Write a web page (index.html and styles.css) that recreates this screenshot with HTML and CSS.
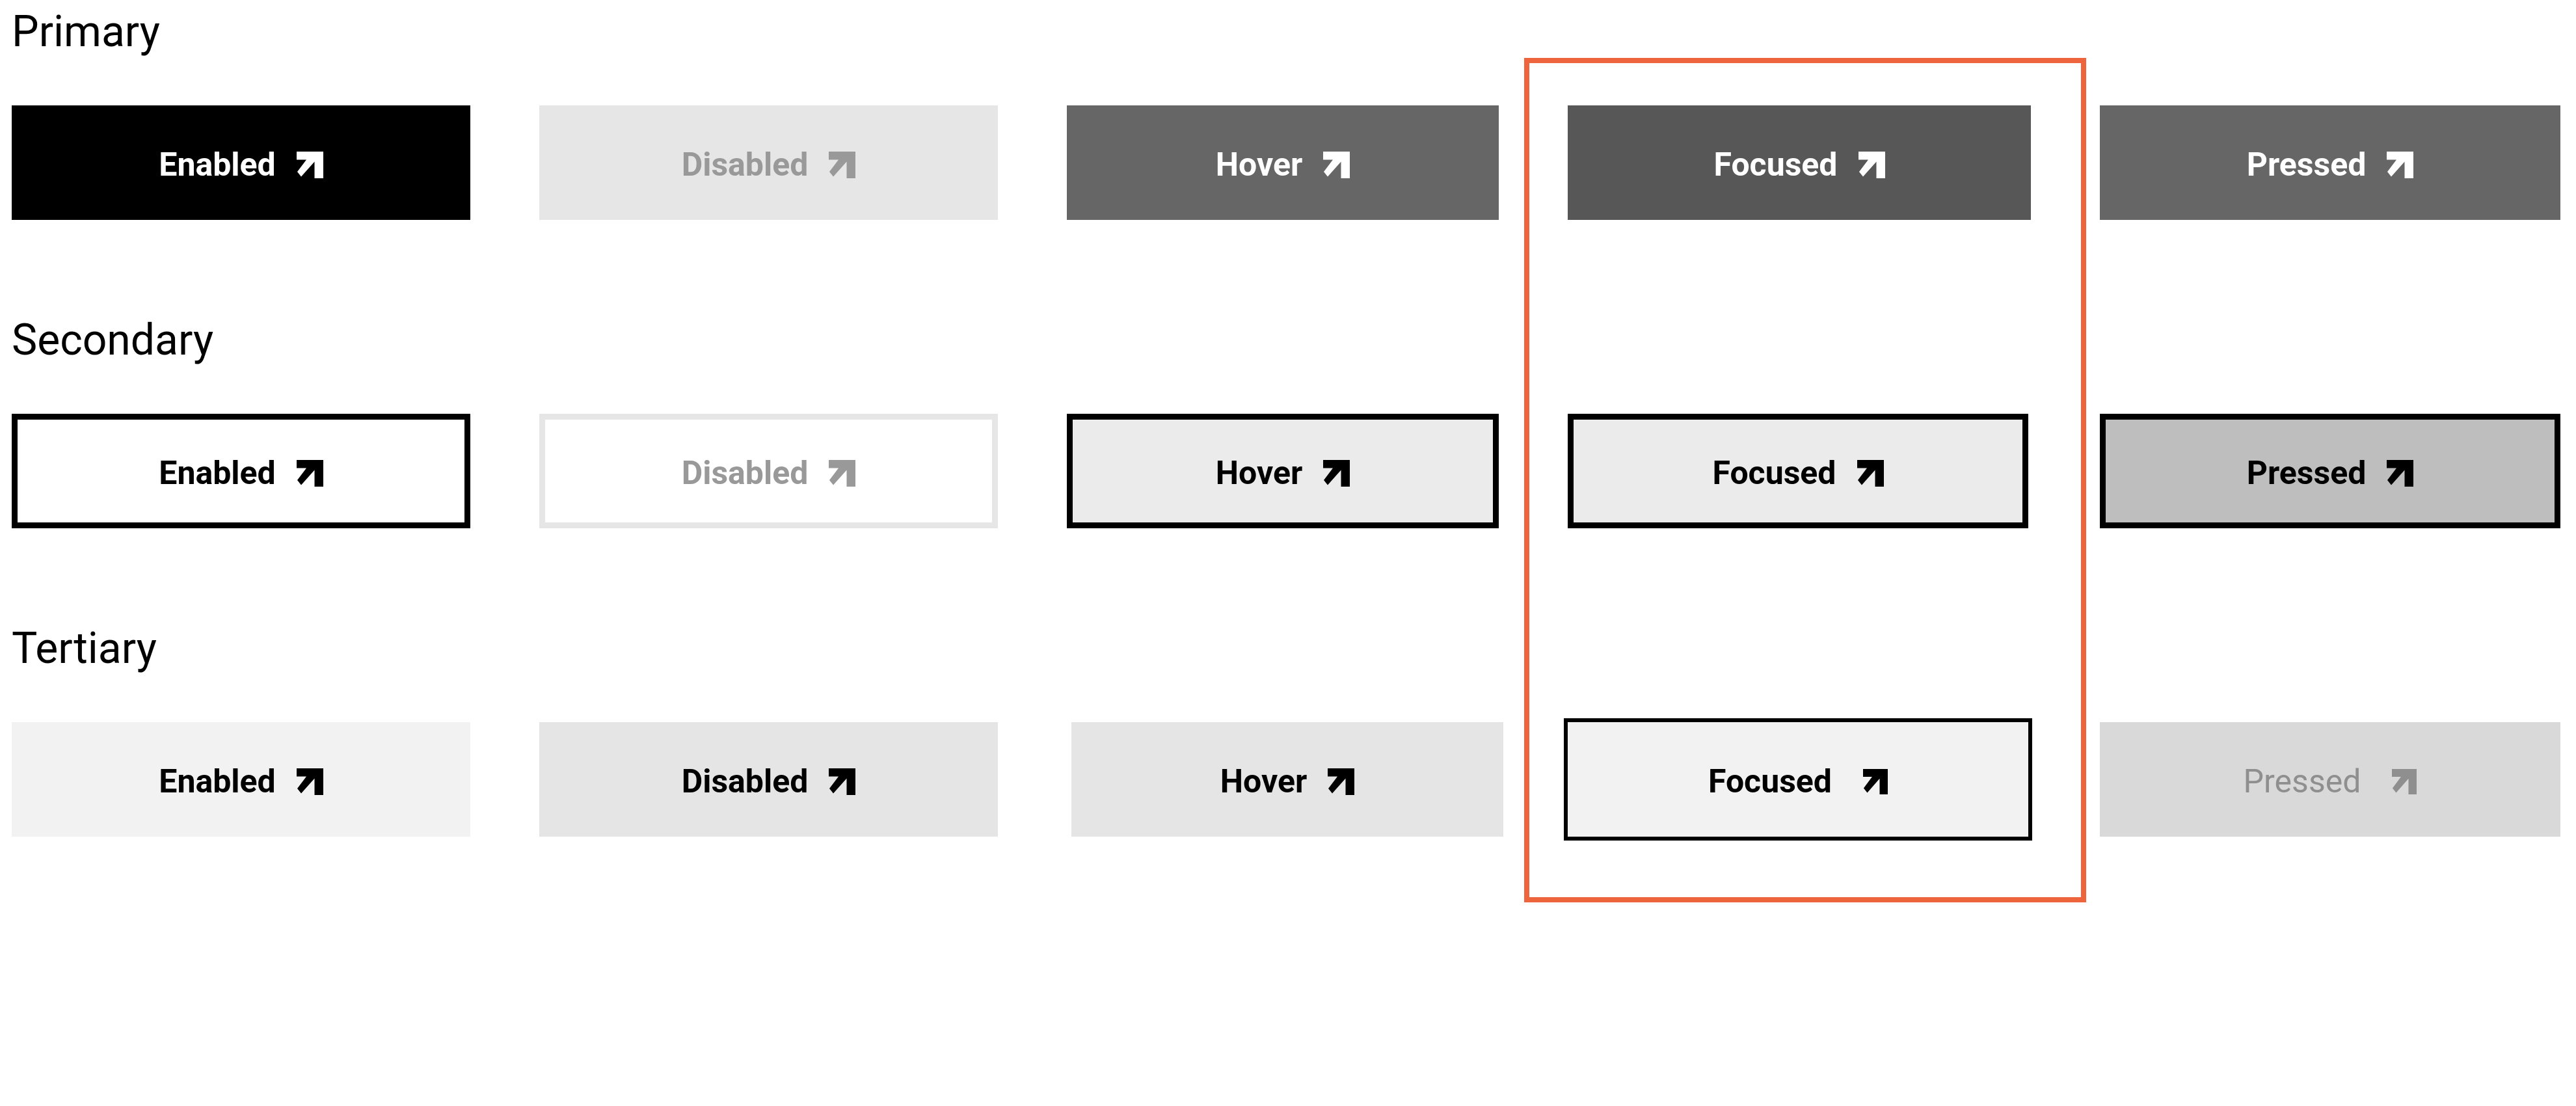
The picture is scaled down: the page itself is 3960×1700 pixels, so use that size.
FILE: index.html
```html
<!DOCTYPE html>
<html lang="en">
<head>
<meta charset="utf-8">
<title>Buttons</title>
<link rel="stylesheet" href="styles.css">
</head>
<body>
<main class="board">
  <div class="focus-frame"></div>

  <h2 class="label row-primary-label">Primary</h2>
  <button class="btn primary enabled"><span>Enabled</span><svg class="arrow" viewBox="0 0 41 41"><polygon points="0,0 41,0 41,41 27.5,41 27.5,15.5 7,38.5 1,31 15,12.5 0,12.5"/></svg></button>
  <button class="btn primary disabled"><span>Disabled</span><svg class="arrow" viewBox="0 0 41 41"><polygon points="0,0 41,0 41,41 27.5,41 27.5,15.5 7,38.5 1,31 15,12.5 0,12.5"/></svg></button>
  <button class="btn primary hover"><span>Hover</span><svg class="arrow" viewBox="0 0 41 41"><polygon points="0,0 41,0 41,41 27.5,41 27.5,15.5 7,38.5 1,31 15,12.5 0,12.5"/></svg></button>
  <button class="btn primary focused"><span>Focused</span><svg class="arrow" viewBox="0 0 41 41"><polygon points="0,0 41,0 41,41 27.5,41 27.5,15.5 7,38.5 1,31 15,12.5 0,12.5"/></svg></button>
  <button class="btn primary pressed"><span>Pressed</span><svg class="arrow" viewBox="0 0 41 41"><polygon points="0,0 41,0 41,41 27.5,41 27.5,15.5 7,38.5 1,31 15,12.5 0,12.5"/></svg></button>

  <h2 class="label row-secondary-label">Secondary</h2>
  <button class="btn secondary enabled"><span>Enabled</span><svg class="arrow" viewBox="0 0 41 41"><polygon points="0,0 41,0 41,41 27.5,41 27.5,15.5 7,38.5 1,31 15,12.5 0,12.5"/></svg></button>
  <button class="btn secondary disabled"><span>Disabled</span><svg class="arrow" viewBox="0 0 41 41"><polygon points="0,0 41,0 41,41 27.5,41 27.5,15.5 7,38.5 1,31 15,12.5 0,12.5"/></svg></button>
  <button class="btn secondary hover"><span>Hover</span><svg class="arrow" viewBox="0 0 41 41"><polygon points="0,0 41,0 41,41 27.5,41 27.5,15.5 7,38.5 1,31 15,12.5 0,12.5"/></svg></button>
  <button class="btn secondary focused"><span>Focused</span><svg class="arrow" viewBox="0 0 41 41"><polygon points="0,0 41,0 41,41 27.5,41 27.5,15.5 7,38.5 1,31 15,12.5 0,12.5"/></svg></button>
  <button class="btn secondary pressed"><span>Pressed</span><svg class="arrow" viewBox="0 0 41 41"><polygon points="0,0 41,0 41,41 27.5,41 27.5,15.5 7,38.5 1,31 15,12.5 0,12.5"/></svg></button>

  <h2 class="label row-tertiary-label">Tertiary</h2>
  <button class="btn tertiary enabled"><span>Enabled</span><svg class="arrow" viewBox="0 0 41 41"><polygon points="0,0 41,0 41,41 27.5,41 27.5,15.5 7,38.5 1,31 15,12.5 0,12.5"/></svg></button>
  <button class="btn tertiary disabled"><span>Disabled</span><svg class="arrow" viewBox="0 0 41 41"><polygon points="0,0 41,0 41,41 27.5,41 27.5,15.5 7,38.5 1,31 15,12.5 0,12.5"/></svg></button>
  <button class="btn tertiary hover"><span>Hover</span><svg class="arrow" viewBox="0 0 41 41"><polygon points="0,0 41,0 41,41 27.5,41 27.5,15.5 7,38.5 1,31 15,12.5 0,12.5"/></svg></button>
  <button class="btn tertiary focused"><span>Focused</span><svg class="arrow arrow-wide" viewBox="0 0 41 41" preserveAspectRatio="none"><polygon points="0,0 41,0 41,41 27.5,41 27.5,15.5 7,38.5 1,31 15,12.5 0,12.5"/></svg></button>
  <button class="btn tertiary pressed"><span>Pressed</span><svg class="arrow arrow-wide" viewBox="0 0 41 41" preserveAspectRatio="none"><polygon points="0,0 41,0 41,41 27.5,41 27.5,15.5 7,38.5 1,31 15,12.5 0,12.5"/></svg></button>
</main>
</body>
</html>
```

FILE: styles.css
```css
html, body {
  margin: 0;
  padding: 0;
  background: #ffffff;
}

body {
  min-height: 1700px;
  font-family: Roboto, "Liberation Sans", sans-serif;
  color: #000;
}

.board {
  display: grid;
  grid-template-columns: 705px 705px 664px 712px 708px;
  grid-template-rows: 162px 176px 298px 176px 298px 176px;
  column-gap: 106px;
  padding: 0 0 300px 18px;
}

/* orange highlight frame around the focused column */
.focus-frame {
  grid-column: 4;
  grid-row: 2 / 7;
  margin: -73px -85px -101px -67px;
  border: 8px solid #ee643c;
  box-sizing: border-box;
}

.label {
  grid-column: 1 / -1;
  align-self: end;
  margin: 0 0 80px 0;
  height: 66px;
  font-family: Roboto, "Liberation Sans", sans-serif;
  font-size: 66px;
  line-height: 66px;
  font-weight: 400;
  color: #000;
}

.row-primary-label { grid-row: 1; }
.row-secondary-label { grid-row: 3; }
.row-tertiary-label { grid-row: 5; }

.btn {
  display: flex;
  align-items: center;
  justify-content: center;
  box-sizing: border-box;
  height: 176px;
  margin: 0;
  padding: 6px 0 0 0;
  border: none;
  background: none;
  font-family: Roboto, "Liberation Sans", sans-serif;
  font-size: 50px;
  line-height: 50px;
  font-weight: 700;
  color: #000;
  cursor: pointer;
}

.arrow {
  width: 41px;
  height: 41px;
  margin-left: 32px;
  fill: currentColor;
  flex: none;
}

.arrow-wide {
  width: 38px;
  height: 39px;
  margin-left: 48px;
}

/* rows */
.primary { grid-row: 2; }
.secondary { grid-row: 4; }
.tertiary { grid-row: 6; }

/* columns by state */
.enabled { grid-column: 1; }
.disabled { grid-column: 2; }
.hover { grid-column: 3; }
.focused { grid-column: 4; }
.pressed { grid-column: 5; }

/* Primary */
.primary { color: #fff; }
.primary.enabled { background: #000; }
.primary.disabled { background: #e6e6e6; color: #999999; }
.primary.hover { background: #666666; }
.primary.focused { background: #575757; }
.primary.pressed { background: #666666; }

/* Secondary */
.secondary { border: 9px solid #000; background: #fff; }
.secondary.disabled { border-color: #e6e6e6; color: #999999; }
.secondary.hover { background: #ebebeb; }
.secondary.focused { background: #ebebeb; margin-right: 4px; }
.secondary.pressed { background: #bebebe; }

/* Tertiary */
.tertiary.enabled { background: #f2f2f2; }
.tertiary.disabled { background: #e5e5e5; }
.tertiary.hover {
  background: #e5e5e5;
  margin-left: 7px;
  margin-right: -7px;
}
.tertiary.focused {
  background: #f2f2f2;
  outline: 6px solid #000;
  margin-right: 4px;
}
.tertiary.pressed {
  background: #d9d9d9;
  color: #8f8f8f;
  font-weight: 400;
}
```
